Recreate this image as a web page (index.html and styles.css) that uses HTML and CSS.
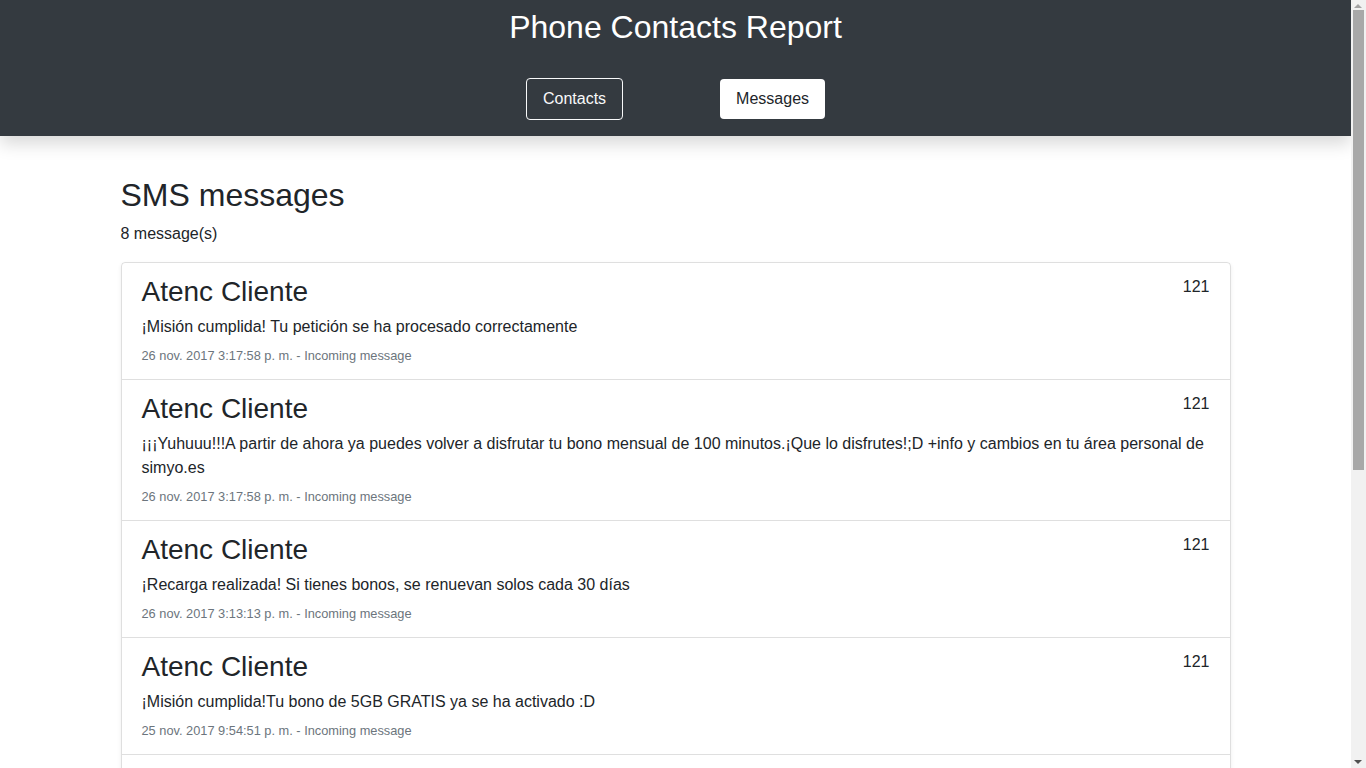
FILE: index.html
```html
<!DOCTYPE html>
<html lang="es">
<head>
<meta charset="utf-8">
<title>Phone Contacts Report</title>
<link rel="stylesheet" href="styles.css">
</head>
<body>
<header class="topbar">
  <h1 class="title">Phone Contacts Report</h1>
  <nav class="nav">
    <a class="btn btn-outline" href="#">Contacts</a>
    <a class="btn btn-light" href="#">Messages</a>
  </nav>
</header>
<main class="container">
  <h2 class="page-title">SMS messages</h2>
  <p class="count">8 message(s)</p>
  <ul class="list">
    <li class="item">
      <div class="item-head"><h3 class="name">Atenc Cliente</h3><span class="num">121</span></div>
      <p class="text">¡Misión cumplida! Tu petición se ha procesado correctamente</p>
      <small class="meta">26 nov. 2017 3:17:58 p. m. - Incoming message</small>
    </li>
    <li class="item">
      <div class="item-head"><h3 class="name">Atenc Cliente</h3><span class="num">121</span></div>
      <p class="text">¡¡¡Yuhuuu!!!A partir de ahora ya puedes volver a disfrutar tu bono mensual de 100 minutos.¡Que lo disfrutes!;D +info y cambios en tu área personal de simyo.es</p>
      <small class="meta">26 nov. 2017 3:17:58 p. m. - Incoming message</small>
    </li>
    <li class="item">
      <div class="item-head"><h3 class="name">Atenc Cliente</h3><span class="num">121</span></div>
      <p class="text">¡Recarga realizada! Si tienes bonos, se renuevan solos cada 30 días</p>
      <small class="meta">26 nov. 2017 3:13:13 p. m. - Incoming message</small>
    </li>
    <li class="item">
      <div class="item-head"><h3 class="name">Atenc Cliente</h3><span class="num">121</span></div>
      <p class="text">¡Misión cumplida!Tu bono de 5GB GRATIS ya se ha activado :D</p>
      <small class="meta">25 nov. 2017 9:54:51 p. m. - Incoming message</small>
    </li>
    <li class="item">
      <div class="item-head"><h3 class="name">Atenc Cliente</h3><span class="num">121</span></div>
      <p class="text">¡Recarga realizada! Si tienes bonos, se renuevan solos cada 30 días</p>
      <small class="meta">25 nov. 2017 9:50:12 p. m. - Incoming message</small>
    </li>
    <li class="item">
      <div class="item-head"><h3 class="name">Atenc Cliente</h3><span class="num">121</span></div>
      <p class="text">¡Bienvenido a simyo! Tu línea ya está activa</p>
      <small class="meta">25 nov. 2017 9:41:07 p. m. - Incoming message</small>
    </li>
    <li class="item">
      <div class="item-head"><h3 class="name">Atenc Cliente</h3><span class="num">121</span></div>
      <p class="text">Tu portabilidad se ha completado correctamente</p>
      <small class="meta">25 nov. 2017 9:30:44 p. m. - Incoming message</small>
    </li>
    <li class="item">
      <div class="item-head"><h3 class="name">Atenc Cliente</h3><span class="num">121</span></div>
      <p class="text">Hemos recibido tu solicitud. Te avisaremos cuando esté lista</p>
      <small class="meta">24 nov. 2017 6:12:03 p. m. - Incoming message</small>
    </li>
  </ul>
</main>
<div class="scrollbar" aria-hidden="true">
  <span class="sb-up"></span>
  <span class="sb-thumb"></span>
  <span class="sb-down"></span>
</div>
</body>
</html>
```

FILE: styles.css
```css
* { box-sizing: border-box; }
html, body {
  margin: 0;
  padding: 0;
}
body {
  margin-right: 15px;
  font-family: "Liberation Sans", Arial, sans-serif;
  font-size: 16px;
  line-height: 1.5;
  color: #212529;
  background: #fff;
}
.topbar {
  background: #343a40;
  padding: 8px 0 16px;
  box-shadow: 0 8px 16px rgba(0, 0, 0, 0.15);
  text-align: center;
  position: relative;
}
.title {
  margin: 0;
  font-size: 32px;
  font-weight: 500;
  line-height: 1.2;
  color: #fff;
}
.nav {
  margin-top: 32px;
  display: flex;
  justify-content: center;
  align-items: center;
  gap: 97px;
}
.btn {
  display: inline-block;
  font-size: 16px;
  line-height: 24px;
  text-decoration: none;
  border-radius: 4px;
}
.btn-outline {
  color: #f8f9fa;
  border: 1px solid #f8f9fa;
  padding: 8px 16px;
}
.btn-light {
  color: #212529;
  background: #fff;
  padding: 8px 16px;
}
.container {
  max-width: 1140px;
  margin: 0 auto;
  padding: 40px 15px 40px;
}
.page-title {
  margin: 0 0 7px;
  font-size: 32px;
  font-weight: 500;
  line-height: 1.2;
}
.count {
  margin: 0 0 16px;
}
.list {
  list-style: none;
  margin: 0;
  padding: 0;
  border: 1px solid rgba(0, 0, 0, 0.125);
  border-radius: 4px;
  box-shadow: 0 2px 4px rgba(0, 0, 0, 0.075);
}
.item {
  padding: 12px 20px 13px;
  border-bottom: 1px solid rgba(0, 0, 0, 0.125);
}
.item:last-child { border-bottom: 0; }
.item-head {
  display: flex;
  justify-content: space-between;
}
.name {
  margin: 0 0 7px;
  font-size: 28px;
  font-weight: 500;
  line-height: 1.2;
}
.text {
  margin: 0 0 7px;
}
.meta {
  display: block;
  font-size: 12.8px;
  line-height: 19.4px;
  color: #6c757d;
}
.scrollbar {
  position: fixed;
  top: 0;
  right: 0;
  width: 15px;
  height: 100vh;
  background: #f1f1f1;
}
.sb-up, .sb-down {
  position: absolute;
  left: 3px;
  width: 0;
  height: 0;
  border-left: 4.5px solid transparent;
  border-right: 4.5px solid transparent;
}
.sb-up {
  top: 4px;
  border-bottom: 4px solid #a3a3a3;
}
.sb-down {
  bottom: 4px;
  border-top: 4px solid #505050;
}
.sb-thumb {
  position: absolute;
  top: 10px;
  left: 2px;
  width: 11px;
  height: 460px;
  background: #a8a8a8;
}
```
